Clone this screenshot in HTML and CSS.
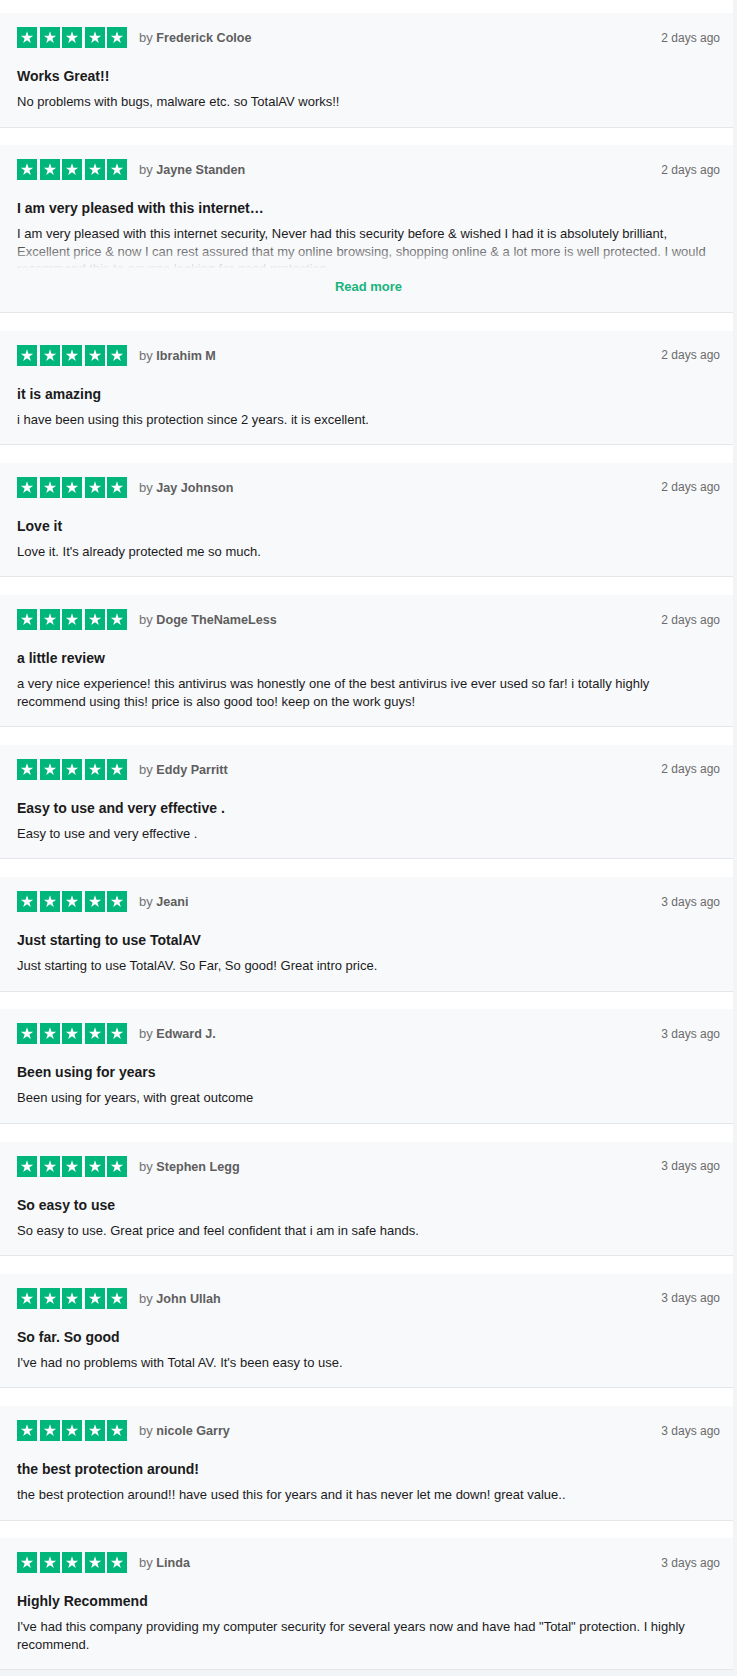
FILE: index.html
```html
<!DOCTYPE html>
<html lang="en">
<head>
    <meta charset="UTF-8">
    <title>TotalAV reviews</title>
    <link rel="stylesheet" href="styles.css">
</head>
<body>
<svg class="sprite" width="0" height="0">
    <symbol id="tp-star" viewBox="0 0 20 21">
        <rect width="20" height="21" fill="#00b67a"/>
        <polygon fill="#fff" points="10,4.3 11.47,8.78 16.18,8.79 12.38,11.57 13.82,16.06 10,13.3 6.18,16.06 7.62,11.57 3.82,8.79 8.53,8.78"/>
    </symbol>
</svg>
<main class="reviews">
    <article class="review">
        <header class="review-head">
            <div class="stars"><svg><use href="#tp-star"/></svg><svg><use href="#tp-star"/></svg><svg><use href="#tp-star"/></svg><svg><use href="#tp-star"/></svg><svg><use href="#tp-star"/></svg></div>
            <span class="author">by <b>Frederick Coloe</b></span>
            <span class="date">2 days ago</span>
        </header>
        <h3 class="review-title">Works Great!!</h3>
        <p class="review-text">No problems with bugs, malware etc. so TotalAV works!!</p>
    </article>
    <article class="review">
        <header class="review-head">
            <div class="stars"><svg><use href="#tp-star"/></svg><svg><use href="#tp-star"/></svg><svg><use href="#tp-star"/></svg><svg><use href="#tp-star"/></svg><svg><use href="#tp-star"/></svg></div>
            <span class="author">by <b>Jayne Standen</b></span>
            <span class="date">2 days ago</span>
        </header>
        <h3 class="review-title">I am very pleased with this internet…</h3>
        <p class="review-text clamped">I am very pleased with this internet security, Never had this security before &amp; wished I had it is absolutely brilliant, Excellent price &amp; now I can rest assured that my online browsing, shopping online &amp; a lot more is well protected. I would recommend this to anyone looking for good protection.</p>
        <a class="read-more" href="#">Read more</a>
    </article>
    <article class="review">
        <header class="review-head">
            <div class="stars"><svg><use href="#tp-star"/></svg><svg><use href="#tp-star"/></svg><svg><use href="#tp-star"/></svg><svg><use href="#tp-star"/></svg><svg><use href="#tp-star"/></svg></div>
            <span class="author">by <b>Ibrahim M</b></span>
            <span class="date">2 days ago</span>
        </header>
        <h3 class="review-title">it is amazing</h3>
        <p class="review-text">i have been using this protection since 2 years. it is excellent.</p>
    </article>
    <article class="review">
        <header class="review-head">
            <div class="stars"><svg><use href="#tp-star"/></svg><svg><use href="#tp-star"/></svg><svg><use href="#tp-star"/></svg><svg><use href="#tp-star"/></svg><svg><use href="#tp-star"/></svg></div>
            <span class="author">by <b>Jay Johnson</b></span>
            <span class="date">2 days ago</span>
        </header>
        <h3 class="review-title">Love it</h3>
        <p class="review-text">Love it. It's already protected me so much.</p>
    </article>
    <article class="review">
        <header class="review-head">
            <div class="stars"><svg><use href="#tp-star"/></svg><svg><use href="#tp-star"/></svg><svg><use href="#tp-star"/></svg><svg><use href="#tp-star"/></svg><svg><use href="#tp-star"/></svg></div>
            <span class="author">by <b>Doge TheNameLess</b></span>
            <span class="date">2 days ago</span>
        </header>
        <h3 class="review-title">a little review</h3>
        <p class="review-text">a very nice experience! this antivirus was honestly one of the best antivirus ive ever used so far! i totally highly recommend using this! price is also good too! keep on the work guys!</p>
    </article>
    <article class="review">
        <header class="review-head">
            <div class="stars"><svg><use href="#tp-star"/></svg><svg><use href="#tp-star"/></svg><svg><use href="#tp-star"/></svg><svg><use href="#tp-star"/></svg><svg><use href="#tp-star"/></svg></div>
            <span class="author">by <b>Eddy Parritt</b></span>
            <span class="date">2 days ago</span>
        </header>
        <h3 class="review-title">Easy to use and very effective .</h3>
        <p class="review-text">Easy to use and very effective .</p>
    </article>
    <article class="review">
        <header class="review-head">
            <div class="stars"><svg><use href="#tp-star"/></svg><svg><use href="#tp-star"/></svg><svg><use href="#tp-star"/></svg><svg><use href="#tp-star"/></svg><svg><use href="#tp-star"/></svg></div>
            <span class="author">by <b>Jeani</b></span>
            <span class="date">3 days ago</span>
        </header>
        <h3 class="review-title">Just starting to use TotalAV</h3>
        <p class="review-text">Just starting to use TotalAV. So Far, So good! Great intro price.</p>
    </article>
    <article class="review">
        <header class="review-head">
            <div class="stars"><svg><use href="#tp-star"/></svg><svg><use href="#tp-star"/></svg><svg><use href="#tp-star"/></svg><svg><use href="#tp-star"/></svg><svg><use href="#tp-star"/></svg></div>
            <span class="author">by <b>Edward J.</b></span>
            <span class="date">3 days ago</span>
        </header>
        <h3 class="review-title">Been using for years</h3>
        <p class="review-text">Been using for years, with great outcome</p>
    </article>
    <article class="review">
        <header class="review-head">
            <div class="stars"><svg><use href="#tp-star"/></svg><svg><use href="#tp-star"/></svg><svg><use href="#tp-star"/></svg><svg><use href="#tp-star"/></svg><svg><use href="#tp-star"/></svg></div>
            <span class="author">by <b>Stephen Legg</b></span>
            <span class="date">3 days ago</span>
        </header>
        <h3 class="review-title">So easy to use</h3>
        <p class="review-text">So easy to use. Great price and feel confident that i am in safe hands.</p>
    </article>
    <article class="review">
        <header class="review-head">
            <div class="stars"><svg><use href="#tp-star"/></svg><svg><use href="#tp-star"/></svg><svg><use href="#tp-star"/></svg><svg><use href="#tp-star"/></svg><svg><use href="#tp-star"/></svg></div>
            <span class="author">by <b>John Ullah</b></span>
            <span class="date">3 days ago</span>
        </header>
        <h3 class="review-title">So far. So good</h3>
        <p class="review-text">I've had no problems with Total AV. It's been easy to use.</p>
    </article>
    <article class="review">
        <header class="review-head">
            <div class="stars"><svg><use href="#tp-star"/></svg><svg><use href="#tp-star"/></svg><svg><use href="#tp-star"/></svg><svg><use href="#tp-star"/></svg><svg><use href="#tp-star"/></svg></div>
            <span class="author">by <b>nicole Garry</b></span>
            <span class="date">3 days ago</span>
        </header>
        <h3 class="review-title">the best protection around!</h3>
        <p class="review-text">the best protection around!! have used this for years and it has never let me down! great value..</p>
    </article>
    <article class="review">
        <header class="review-head">
            <div class="stars"><svg><use href="#tp-star"/></svg><svg><use href="#tp-star"/></svg><svg><use href="#tp-star"/></svg><svg><use href="#tp-star"/></svg><svg><use href="#tp-star"/></svg></div>
            <span class="author">by <b>Linda</b></span>
            <span class="date">3 days ago</span>
        </header>
        <h3 class="review-title">Highly Recommend</h3>
        <p class="review-text">I've had this company providing my computer security for several years now and have had "Total" protection. I highly recommend.</p>
    </article>
</main>
</body>
</html>
```
FILE: styles.css
```css
html{
    background-color: #f3f4f6;
}
body{
    margin: 0;
    font-family: "Liberation Sans", Arial, sans-serif;
    color: #1b1b1b;
}
.sprite{
    display: block;
    width: 0;
    height: 0;
}
.reviews{
    width: 733px;
    padding-top: 13px;
    background-color: #fff;
}
.review{
    background-color: #f8f9fb;
    padding: 14px 13px 16px 17px;
    border-bottom: 1px solid #e4e6ea;
    margin-bottom: 17.75px;
}
.review-head{
    display: flex;
    align-items: center;
    height: 21px;
}
.stars{
    display: flex;
    gap: 2.5px;
}
.stars svg{
    width: 20px;
    height: 21px;
    display: block;
}
.author{
    margin-left: 12px;
    font-size: 13px;
    color: #737373;
}
.author b{
    font-size: 12.6px;
    color: #5e5e5e;
}
.date{
    margin-left: auto;
    font-size: 12px;
    color: #6b6b6b;
}
.review-title{
    margin: 19px 0 0;
    font-size: 14px;
    line-height: 18px;
    font-weight: bold;
}
.review-text{
    margin: 8px 0 0;
    padding-right: 3px;
    font-size: 13px;
    line-height: 17.5px;
}
.review-text.clamped{
    max-height: 47px;
    overflow: hidden;
    position: relative;
}
.review-text.clamped::after{
    content: "";
    position: absolute;
    left: 0;
    right: 0;
    bottom: 0;
    height: 32px;
    background: linear-gradient(rgba(248, 249, 251, 0), #f8f9fb 90%);
}
.read-more{
    display: block;
    margin-top: 6px;
    text-align: center;
    font-size: 13px;
    line-height: 17.5px;
    font-weight: bold;
    color: #19b37b;
    text-decoration: none;
}
```
